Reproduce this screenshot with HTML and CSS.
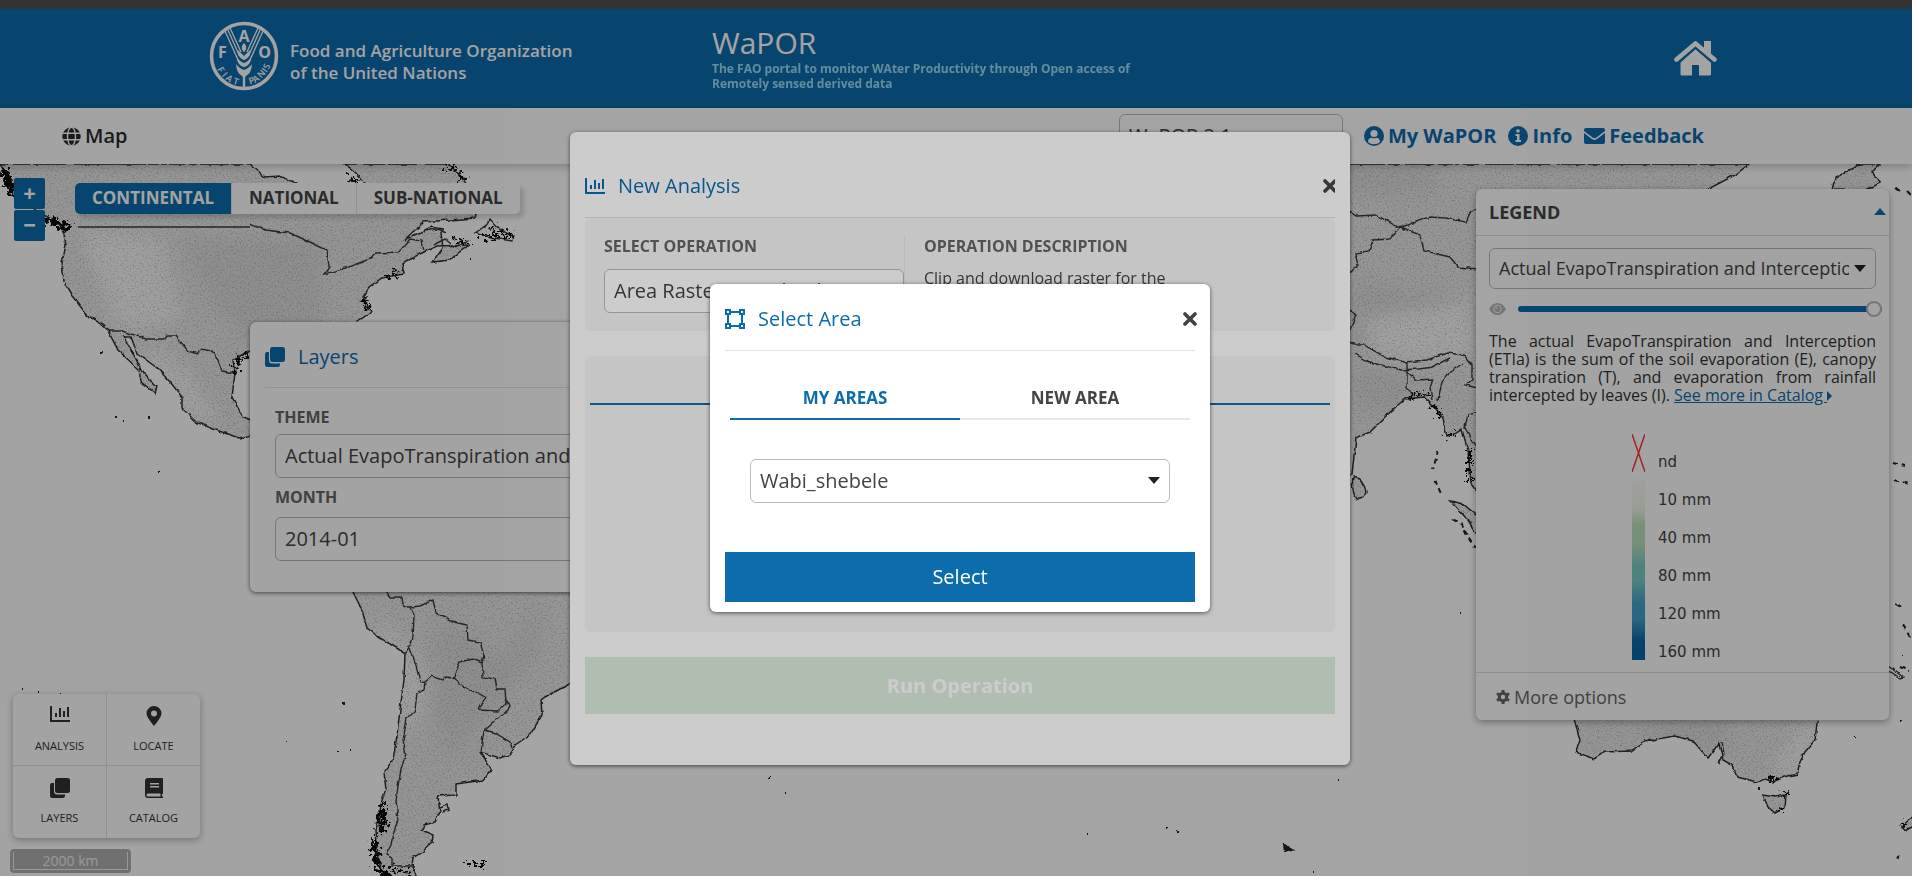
FILE: index.html
```html
<!DOCTYPE html>
<html lang="en">
<head>
<meta charset="utf-8">
<title>WaPOR</title>
<meta name="viewport" content="width=device-width, initial-scale=1">
<link rel="stylesheet" href="styles.css">
</head>
<body>
<svg class="sprite" aria-hidden="true">
  <symbol id="i-chart" viewBox="0 0 20 16"><path d="M1 0v15h19" fill="none" stroke="currentColor" stroke-width="2"/><path d="M5 7h2v4H5zM9 2h2v9H9zM13 5h2v6h-2zM17 1h2v10h-2z" fill="currentColor"/></symbol>
  <symbol id="i-layers" viewBox="0 0 20 20"><path d="M7.500 0h10A2.500 2.500 0 0 1 20 2.500v10a2.500 2.500 0 0 1-2.500 2.500h-10A2.500 2.500 0 0 1 5 12.500v-10A2.500 2.500 0 0 1 7.500 0z" fill="currentColor"/><path d="M4 5H2a2 2 0 0 0-2 2v11a2 2 0 0 0 2 2h11a2 2 0 0 0 2-2v-1.500H7A3 3 0 0 1 4 13z" fill="currentColor"/></symbol>
  <symbol id="i-x" viewBox="0 0 14 14"><path d="M2 2l10 10M12 2L2 12" stroke="currentColor" stroke-width="3.600" stroke-linecap="round"/></symbol>
  <symbol id="i-down" viewBox="0 0 12 7"><path d="M0 0h12L6 7z" fill="currentColor"/></symbol>
</svg>

<div class="app">
  <div class="strip"></div>
  <header class="banner">
    <div class="brand">
      <svg class="fao" viewBox="0 0 70 70" role="img" aria-label="FAO emblem">
        <circle cx="35" cy="35" r="32.500" fill="none" stroke="#fff" stroke-width="3.500"/>
        <g fill="none" stroke="#fff" stroke-width="1.300">
          <path d="M16 10l13 29M18.500 8l12 27M21 7l11 24M54 10L41 39M51.500 8l-12 27M49 7L38 31"/>
        </g>
        <g fill="#fff">
          <path d="M35 22c3 3 3 6 0 9-3-3-3-6 0-9z"/>
          <path d="M29 29l6 6 6-6v4q-2 5-6 6-4-1-6-6zM28 36q3 5 7 6 4-1 7-6v3q-2 6-7 7-5-1-7-7zM27 43q4 5 8 6 4-1 8-6-.500 9-6 12l-.800 1V67h-2.400V56l-.800-1q-5.500-3-6-12z"/>
          <g class="fao-big"><text x="35" y="21" text-anchor="middle">A</text><text x="13.500" y="36.500" text-anchor="middle">F</text><text x="55.500" y="36.500" text-anchor="middle">O</text></g>
          <g class="fao-small"><text transform="translate(8 48) rotate(62)">F</text><text transform="translate(12.500 54.500) rotate(50)">I</text><text transform="translate(16 58) rotate(38)">A</text><text transform="translate(23.500 62.500) rotate(20)">T</text><text transform="translate(41 63.500) rotate(-18)">P</text><text transform="translate(46 62) rotate(-32)">A</text><text transform="translate(52 57.500) rotate(-45)">N</text><text transform="translate(57.500 52) rotate(-55)">I</text><text transform="translate(59.500 49) rotate(-65)">S</text></g>
        </g>
      </svg>
      <p class="org">Food and Agriculture Organization<br>of the United Nations</p>
    </div>
    <div class="headline">
      <h1>WaPOR</h1>
      <p>The FAO portal to monitor WAter Productivity through Open access of Remotely sensed derived data</p>
    </div>
    <a class="home" href="#" aria-label="Home"><svg width="43" height="35" viewBox="0 0 43 35"><path d="M21.500 8L37 21.500V33a1.500 1.500 0 0 1-1.500 1.500H25V24h-7v10.500H8A1.500 1.500 0 0 1 6.500 33V21.500z" fill="#fff"/><path d="M2.500 18.500L21.500 2.500 40.500 18.500" fill="none" stroke="#fff" stroke-width="4.500" stroke-linecap="round"/><path d="M30 0h7v13l-7-6z" fill="#fff"/><path d="M5 21.500L21.500 7.300 38 21.500" fill="none" stroke="#0d6cac" stroke-width="1.500"/></svg></a>
  </header>

  <nav class="nav">
    <a class="nav-map" href="#"><svg width="19" height="19" viewBox="0 0 19 19"><circle cx="9.500" cy="9.500" r="9.200" fill="#2b2b2b"/><g fill="none" stroke="#fff" stroke-width="1.400"><ellipse cx="9.500" cy="9.500" rx="4" ry="9.200"/><path d="M0 6.200h19M0 12.800h19"/></g></svg>Map</a>
    <span class="pick nav-version"><select aria-label="Version"><option>WaPOR 2.1</option></select></span>
    <a class="nav-link" href="#"><svg width="20" height="20" viewBox="0 0 20 20"><circle cx="10" cy="10" r="10" fill="currentColor"/><circle cx="10" cy="7.500" r="3.600" fill="#fff"/><path d="M4 16c0-3 2-4.200 3.500-4.200q2.500 1 5 0C14 11.800 16 13 16 16c-3 3-9 3-12 0z" fill="#fff"/></svg>My WaPOR</a>
    <a class="nav-link" href="#"><svg width="20" height="20" viewBox="0 0 20 20"><circle cx="10" cy="10" r="10" fill="currentColor"/><circle cx="10" cy="5" r="1.800" fill="#fff"/><path d="M7.500 8h4v6H13v2H7.500v-2H9v-4H7.500z" fill="#fff"/></svg>Info</a>
    <a class="nav-link" href="#"><svg width="21" height="16" viewBox="0 0 21 16"><path d="M2 0h17a2 2 0 0 1 2 2v1l-8.500 6.500q-2 1.500-4 0L0 3V2a2 2 0 0 1 2-2zM0 5l8 6q2.500 1.800 5 0l8-6v9a2 2 0 0 1-2 2H2a2 2 0 0 1-2-2z" fill="currentColor"/></svg>Feedback</a>
  </nav>

  <main class="map">
    <svg class="world" viewBox="0 164 1912 712" preserveAspectRatio="xMidYMin slice" aria-hidden="true">
      <defs>
        <filter id="rough" x="-5%" y="-5%" width="110%" height="110%" color-interpolation-filters="sRGB"><feTurbulence type="fractalNoise" baseFrequency="0.120" numOctaves="3" seed="4"/><feDisplacementMap in="SourceGraphic" scale="4" xChannelSelector="R" yChannelSelector="G"/></filter>
        <filter id="ragged" x="-20%" y="-20%" width="140%" height="140%" color-interpolation-filters="sRGB"><feTurbulence type="fractalNoise" baseFrequency="0.250" numOctaves="3" seed="9"/><feDisplacementMap in="SourceGraphic" scale="18" xChannelSelector="R" yChannelSelector="G"/></filter>
        <filter id="relief" x="0" y="0" width="100%" height="100%" color-interpolation-filters="sRGB"><feTurbulence type="fractalNoise" baseFrequency="0.600" numOctaves="3" seed="7"/><feColorMatrix values="0 0 0 0 0.350  0 0 0 0 0.350  0 0 0 0 0.350  4 0 0 0 -2.050"/><feComposite in2="SourceGraphic" operator="in"/></filter>
        <filter id="soft"><feGaussianBlur stdDeviation="9"/></filter>
        <clipPath id="landclip"><use href="#landshape"/></clipPath>
        <path id="landshape" d="M0 164L5 172 12 180 14 196 30 206 44 215 60 224 64 235 66 245 62 263 64 282 73 297 87 315 98 322 108 331 118 350 139 370 141 382 155 393 157 387 143 373 135 357 124 337 131 337 137 353 157 368 171 383 182 397 182 408 196 422 216 430 239 438 252 435V420L243 417 232 397 235 373 233 360 252 350 350 330 357 322 371 312 363 297 369 288 382 278 404 274 402 263 424 252 437 246 469 245 449 260 433 262 443 248 441 233 443 229 431 227 404 240 424 222 475 218 478 205 465 182 453 167 447 164H345L355 172 365 183 340 200H310L296 183 280 176 265 177 250 164Z
          M352 590L362 610 367 628 380 638 403 652 405 653 404 680 400 710 397 735 393 760 384 772 386 790 382 800 376 830 378 860 386 880H418L412 867 413 858 422 852 432 843 433 835 421 830 424 825 435 822 440 812 438 796 456 795 456 784 484 780 491 770 486 760 480 752 500 758 510 755 515 745 530 735 542 715 541 700 545 697 575 681V585Z
          M1345 164V475H1352L1356 438 1370 432 1385 417 1398 405 1405 399 1425 397 1433 405 1443 418 1447 437 1462 430 1468 450 1471 483 1480 495 1700 200 1708 189 1735 175 1749 164Z
          M1832 190L1835 178 1860 164H1880L1872 172 1880 183 1866 190Z
          M1353 477Q1362 475 1366 492 1364 500 1357 499 1351 490 1353 477Z
          M1450 501L1463 504 1480 518V540L1468 520Z
          M1573 715L1580 740 1576 752 1594 759 1605 752 1631 751 1645 741 1675 736 1693 741 1708 758 1719 743 1723 760 1732 765 1737 777 1757 782 1765 779 1773 782 1784 777 1797 774 1800 762 1805 752 1815 740 1818 715Z
          M1763 795L1775 797 1786 795 1785 808 1775 813 1768 807Z
          M1915 815L1902 826 1905 830 1915 826Z"/>
      </defs>
      <rect y="164" width="1912" height="712" fill="#fff"/>
      <g filter="url(#rough)">
        <use href="#landshape" fill="#e9e9e9"/>
        <g clip-path="url(#landclip)">
          <g fill="#dedede" filter="url(#soft)"><path d="M180 240h140v120h-50l-60-60zM440 610l60 50 40-60v50l-90 110-20-60zM1350 280l110 20v20l-110 30zM1350 370h60v40h-60zM1345 164h90v30h-90zM1640 720h90v30l-80-10z"/></g>
          <g fill="#f9f9f9" filter="url(#soft)"><path d="M80 230l80 10 20 80-60 10zM140 345l40 20 40 60h-20l-50-50zM370 600l60 80-20 60-20-80zM1360 320l110-20v60h-90zM1800 725h20v20l-20 30h-30z"/></g>
        </g>
        <use href="#landshape" fill="none" stroke="#303030" stroke-width="1.500"/>
        <g fill="none" stroke="#3a3a3a" stroke-width="1.400">
          <path d="M108 331H122L146 339H165L167 336H176L188 351 197 354 202 349 211 351 218 360 222 371 235 373"/>
          <path d="M250 224L265 230 290 233 310 242 327 250 329 267 324 274 349 267 363 262 376 254 398 253 410 239 422 241 424 250"/>
          <path d="M386 590L390 598 402 598 404 607 411 607 414 615 413 637 411 645 405 653M411 607L420 606 433 600 436 613 458 623 467 625 468 640 480 642 484 655 482 663 472 659 460 662 453 678 446 677 443 680 432 676 425 682 420 683 416 665 410 648M453 678L465 687 485 698 479 710 498 711 506 703 505 689 497 689 495 679 483 677 482 663M505 699L510 705 508 710 485 730 483 735 481 752M485 730L495 733 510 742 512 748M425 682L424 690 417 693 415 710 407 718 403 740 406 755 402 765 399 780 396 800 398 820 393 835 391 845 386 855 392 858V866H414"/>
          <path d="M1350 211L1357 216 1376 215 1398 227 1408 225 1430 217 1445 218 1466 222 1470 213 1478 208M1400 227L1420 235 1424 251 1450 257 1458 267 1478 269M1400 227L1389 239 1373 240 1369 251 1355 253 1358 265 1350 273M1350 310L1356 314 1350 330M1350 342L1357 345 1364 345 1385 357 1405 362 1427 360 1447 353 1464 355 1472 365 1472 380 1466 385 1478 388M1355 354L1370 362 1400 370 1420 369 1432 367 1450 358M1407 361L1407 372 1417 380 1433 379 1430 388 1432 400M1407 372V388L1415 396M1438 400L1442 382 1450 372 1462 364M1478 411L1468 414 1465 428 1472 440 1478 448"/>
          <path d="M475 233L485 226 490 219 500 230 513 236 512 241 500 239 490 237ZM424 232Q437 226 446 233M433 245l12-6 10 8 14-6M1888 666L1903 677 1900 678 1888 670ZM1722 742l2 12-6 9M440 808l8-3 1 5-7 2"/>
        </g>
      </g>
      <path d="M78 227H250" stroke="#3a3a3a" stroke-width="1.400"/>
      <use href="#landshape" fill="#000" filter="url(#relief)" opacity=".25"/>
      <g filter="url(#ragged)" fill="none" stroke="#0c0c0c" stroke-width="7">
        <path d="M3 168L8 182 12 196M45 219L56 223 70 227M382 808L382 832M374 838L376 858 380 870 392 876"/>
        <path d="M374 842L378 866 390 874M384 802v22M392 868l20 6M466 864h18M490 228l22 8" stroke-width="4" stroke-dasharray="5 2"/>
        <path d="M445 168L458 170 464 182M350 178l10 6M364 298l4 12M385 276l18-4M455 240l14 4M483 236l30 0M235 372l4-12 11-6M1408 398L1424 392 1428 398M1432 405L1444 418M1446 436L1456 434M1470 450V482M1770 778l8 4M1784 790l2 6M1777 810l6-2M1902 826l4-3" stroke-width="4" stroke-dasharray="6 3"/>
      </g>
      <g filter="url(#rough)" fill="none" stroke="#222" stroke-width="2">
        <path d="M1438 450L1433 470M1435 480L1442 496M1452 519L1462 524 1468 538 1476 548M1893 463l12 3M1894 480l16 4M1896 604l6 4M1903 625l8 14M1900 667l9 4M102 322l5 6M131 350l3 5" stroke-dasharray="5 4"/>
        <path d="M100 353h2M123 421h1M115 417h2M148 417h2M158 472h1M22 689h1M38 692h1M60 694h1M343 704h2M285 742h1M338 751h1M350 750h1M769 778h2M786 793h1M1087 834h1M1166 828h2M1177 831h2M1313 872h2M1338 780h1M1460 613h1M1902 656h1M1901 721h1M1854 737h1M1758 789h2M1897 858l2-2M1896 188l4 3M1907 191l4 4M470 259h1"/>
        <path d="M1284 845l8 5-7 2z" fill="#222"/>
      </g>
    </svg>

    <div class="zoom"><button type="button">+</button><button type="button">−</button></div>
    <div class="levels">
      <button type="button" class="active">CONTINENTAL</button><button type="button">NATIONAL</button><button type="button">SUB-NATIONAL</button>
    </div>

    <section class="layers">
      <h2 class="panel-title"><svg width="20" height="20"><use href="#i-layers"/></svg>Layers</h2>
      <div class="layers-body">
        <label for="theme">THEME</label>
        <span class="pick"><select id="theme"><option>Actual EvapoTranspiration and Interception</option></select></span>
        <label for="month">MONTH</label>
        <span class="pick"><select id="month"><option>2014-01</option></select></span>
      </div>
    </section>

    <div class="tools">
      <button type="button"><svg width="20" height="16"><use href="#i-chart"/></svg>ANALYSIS</button>
      <button type="button"><svg width="16" height="20" viewBox="0 0 16 20"><path fill-rule="evenodd" d="M8 0a7.500 7.500 0 0 1 7.500 7.500Q15.500 11 8 20 .500 11 .500 7.500A7.500 7.500 0 0 1 8 0zM8 4.500a3 3 0 1 0 0 6 3 3 0 0 0 0-6z" fill="currentColor"/></svg>LOCATE</button>
      <button type="button"><svg width="20" height="20"><use href="#i-layers"/></svg>LAYERS</button>
      <button type="button"><svg width="18" height="20" viewBox="0 0 18 20"><path fill-rule="evenodd" d="M3 0h15v16h-1v2.500h1V20H3a3 3 0 0 1-3-3V3a3 3 0 0 1 3-3zM3 15.500a1.500 1.500 0 0 0 0 3h12.500v-3zM5 5v1.500h9V5zM5 8v1.500h9V8z" fill="currentColor"/></svg>CATALOG</button>
    </div>
    <div class="scale"><span>2000 km</span></div>

    <aside class="legend">
      <header><h2>LEGEND</h2><svg width="12" height="7" viewBox="0 0 12 7"><path d="M0 7h12L6 0z" fill="#0d6cac"/></svg></header>
      <div class="legend-body">
        <span class="pick small"><select aria-label="Legend layer"><option>Actual EvapoTranspiration and Interception</option></select><svg class="caret" width="12" height="7"><use href="#i-down"/></svg></span>
        <div class="opacity">
          <svg width="17" height="12" viewBox="0 0 17 12"><path d="M0 6Q3.500 0 8.500 0T17 6Q13.500 12 8.500 12T0 6z" fill="#b5b5b5"/><circle cx="8.500" cy="6" r="3.700" fill="none" stroke="#eee" stroke-width="1.200"/><path d="M8 3.500Q6.500 4 6.300 6H8z" fill="#eee"/></svg>
          <input type="range" min="0" max="100" value="100" aria-label="Opacity">
        </div>
        <p>The actual EvapoTranspiration and Interception (ETIa) is the sum of the soil evaporation (E), canopy transpiration (T), and evaporation from rainfall intercepted by leaves (I). <a href="#">See more in Catalog <svg width="5" height="10" viewBox="0 0 5 10"><path d="M0 0l5 5-5 5z" fill="currentColor"/></svg></a></p>
        <div class="ramp">
          <div class="bar"><svg width="13" height="38" viewBox="0 0 13 38"><path d="M0 0l13 38M13 0L0 38" stroke="#f33" stroke-width="1.500"/></svg><i></i></div>
          <ul><li>nd</li><li>10 mm</li><li>40 mm</li><li>80 mm</li><li>120 mm</li><li>160 mm</li></ul>
        </div>
      </div>
      <footer><button type="button"><svg width="14" height="14" viewBox="0 0 14 14"><circle cx="7" cy="7" r="3.700" fill="none" stroke="currentColor" stroke-width="3"/><path d="M7 0v3M7 11v3M.900 3.500l2.600 1.500M10.500 9l2.600 1.500M.900 10.500L3.500 9M10.500 5l2.600-1.500" stroke="currentColor" stroke-width="3"/></svg>More options</button></footer>
    </aside>
  </main>
</div>

<div class="backdrop">
  <section class="modal analysis" role="dialog" aria-labelledby="analysis-title">
    <header class="modal-head">
      <h2 class="panel-title" id="analysis-title"><svg width="20" height="16"><use href="#i-chart"/></svg>New Analysis</h2>
      <button type="button" class="close" aria-label="Close"><svg width="14" height="14"><use href="#i-x"/></svg></button>
    </header>
    <div class="box operation">
      <div class="op-pick"><label for="op">SELECT OPERATION</label><span class="pick"><select id="op"><option>Area Raster Download</option></select></span></div>
      <div class="op-text"><h3>OPERATION DESCRIPTION</h3><p>Clip and download raster for the</p></div>
    </div>
    <div class="box params"><div class="rule"></div></div>
    <button type="button" class="run" disabled>Run Operation</button>
  </section>
</div>

<div class="backdrop">
  <section class="modal area" role="dialog" aria-labelledby="area-title">
    <header class="modal-head">
      <h2 class="panel-title" id="area-title"><svg width="20" height="20" viewBox="0 0 20 20"><path d="M3 3h14v14H3z" fill="none" stroke="currentColor" stroke-width="2"/><g fill="#fff" stroke="currentColor" stroke-width="2"><path d="M1 1h4v4H1zM15 1h4v4h-4zM1 15h4v4H1zM15 15h4v4h-4z"/></g></svg>Select Area</h2>
      <button type="button" class="close" aria-label="Close"><svg width="14" height="14"><use href="#i-x"/></svg></button>
    </header>
    <div class="tabs" role="tablist"><button type="button" role="tab" aria-selected="true">MY AREAS</button><button type="button" role="tab" aria-selected="false">NEW AREA</button></div>
    <span class="pick"><select aria-label="Area"><option>Wabi_shebele</option></select><svg class="caret" width="12" height="7"><use href="#i-down"/></svg></span>
    <button type="button" class="choose">Select</button>
  </section>
</div>
</body>
</html>
```
FILE: styles.css
```css
* { box-sizing: border-box; }
body { margin: 0; font: 16px/20px "Open Sans", "Noto Sans", sans-serif; color: #444; overflow: hidden; }
h1, h2, h3, p, ul { margin: 0; padding: 0; font-weight: 400; }
ul { list-style: none; }
button { font: inherit; color: inherit; border: 0; background: none; padding: 0; }
svg { display: block; flex: none; }
.sprite { position: absolute; width: 0; height: 0; }

.app { min-height: 100vh; display: flex; flex-direction: column; }
.strip { height: 9px; background: #505050; }
.banner { height: 99px; padding: 0 195px 0 209px; background: #0d6cac; color: #fff; display: flex; }
.brand { width: 503px; display: flex; gap: 11px; padding-top: 12px; }
.fao { width: 70px; height: 70px; }
.fao-big { font: 700 16px "Open Sans", sans-serif; }
.fao-small { font: 600 9px "Open Sans", sans-serif; }
.org { padding-top: 19px; font-size: 17px; line-height: 22px; font-weight: 600; }
.headline { width: 460px; padding-top: 15px; }
.headline h1 { font-size: 30px; line-height: 37px; }
.headline p { font-size: 12px; line-height: 15px; font-weight: 700; color: #a9e7ff; opacity: .9; }
.home { margin-left: auto; padding-top: 32px; }

.nav { height: 56px; padding: 0 208px 0 62px; background: #fff; display: flex; align-items: center; gap: 12px; box-shadow: 0 2px 8px rgba(0,0,0,.25); position: relative; z-index: 1; }
.nav a { display: flex; align-items: center; gap: 4px; font-size: 20px; line-height: 28px; font-weight: 600; text-decoration: none; }
.nav-map { color: #2b2b2b; margin-right: auto; }
.nav .nav-link { color: #0d6cac; font-weight: 700; }
.nav-version { width: 224px; margin-right: 9px; }

.pick { display: block; position: relative; }
.pick select { appearance: none; display: block; width: 100%; height: 44px; padding: 0 26px 2px 9px; border: 1px solid #bbb; border-radius: 6px; background: #fff; font: 20px "Open Sans", sans-serif; color: #444; }
.pick.small select { height: 41px; font-size: 18px; }
.caret { position: absolute; right: 10px; top: 50%; margin-top: -4px; color: #222; }

.map { flex: 1; position: relative; overflow: hidden; }
.world { position: absolute; inset: 0; width: 100%; height: 100%; }
.zoom, .levels, .layers, .tools, .scale, .legend { position: absolute; }
.zoom { left: 14px; top: 14px; display: grid; gap: 1px; }
.zoom button { width: 31px; height: 31px; background: #0d6cac; color: #fff; font-size: 22px; line-height: 26px; padding-bottom: 4px; font-weight: 700; border-radius: 2px; }
.levels { left: 75px; top: 19px; display: flex; background: #fff; border-radius: 5px; box-shadow: 4px 4px 4px rgba(0,0,0,.15); }
.levels button { height: 31px; padding: 0 17px 1px; font-size: 17px; font-weight: 700; border-left: 1px solid #e3e3e3; }
.levels .active { background: #0d6cac; color: #fff; border-radius: 5px 0 0 5px; border-left: 0; }
.layers { left: 250px; top: 158px; width: 520px; padding: 0 15px 31px; background: #fff; border-radius: 6px; box-shadow: 0 1px 4px rgba(0,0,0,.6); }
.panel-title { display: flex; align-items: center; gap: 13px; font-size: 20px; line-height: 28px; color: #0d6cac; }
.layers .panel-title { height: 66px; padding-top: 4px; border-bottom: 1px solid #e3e3e3; }
.layers-body { padding: 19px 10px 0; }
label, h3 { display: block; font-size: 16px; line-height: 20px; font-weight: 700; color: #666; }
.layers-body label { padding: 0 0 7px; }
.layers-body .pick + label { padding: 9px 0 10px; }
.tools { left: 13px; bottom: 38px; display: grid; grid-template-columns: 94px 93px; background: #fff; border-radius: 6px; box-shadow: 0 2px 7px rgba(0,0,0,.3); }
.tools button { height: 72px; display: flex; flex-direction: column; align-items: center; justify-content: space-between; padding: 12px 0 11px; font-size: 11px; line-height: 18px; color: #333; }
.tools button:nth-child(odd) { border-right: 1px solid #e3e3e3; }
.tools button:nth-child(-n+2) { border-bottom: 1px solid #e3e3e3; padding-bottom: 10px; }
.scale { left: 10px; bottom: 3px; width: 121px; padding: 3px; background: #b0b0b0; border-radius: 4px; }
.scale span { display: block; height: 18px; border: 1px solid #eee; border-top: 0; text-align: center; font-size: 14px; line-height: 17px; color: #eee; }

.legend { right: 23px; top: 25px; width: 413px; background: #fff; border-radius: 6px; box-shadow: 0 2px 7px rgba(0,0,0,.35); }
.legend > header { height: 47px; padding: 0 3px 1px 13px; border-bottom: 1px solid #ddd; display: flex; align-items: center; justify-content: space-between; }
.legend h2 { font-size: 18px; font-weight: 700; }
.legend-body { padding: 12px 13px; }
.opacity { display: flex; gap: 12px; align-items: center; margin: 10px -6px 13px 0; height: 20px; }
.opacity input { appearance: none; flex: 1; min-width: 0; height: 6px; margin: 0; border-radius: 3px; background: #0d6cac; }
.opacity input::-webkit-slider-thumb { appearance: none; width: 16px; height: 16px; border: 2px solid #bbb; border-radius: 50%; background: #fff; }
.legend p { font-size: 16px; line-height: 18px; text-align: justify; color: #333; }
.legend p a { color: #0d6cac; }
.legend p svg { display: inline-block; }
.ramp { display: flex; gap: 13px; margin: 30px 0 0 143px; font: 15px/38px "DejaVu Sans", sans-serif; }
.bar { width: 13px; }
.bar i { display: block; height: 188px; background: linear-gradient(#fff, #eff5e8 20%, #b9e3bb 28%, #b9e3bb 38%, #79cbc4 50%, #79cbc4 58%, #43a2ca 70%, #43a2ca 78%, #0868ac 90%); }
.ramp ul { padding-top: 9px; margin-bottom: -11px; }
.legend footer { border-top: 1px solid #ddd; padding: 0 20px; }
.legend footer button { height: 47px; display: flex; align-items: center; gap: 4px; font-size: 18px; color: #666; }

.backdrop { position: fixed; inset: 0; z-index: 5; background: rgba(0,0,0,.2); display: flex; justify-content: center; align-items: flex-start; padding-left: 8px; }
.modal { background: #fff; border-radius: 6px; box-shadow: 0 1px 4px rgba(0,0,0,.6); padding: 0 15px; }
.modal-head { display: flex; justify-content: space-between; align-items: center; border-bottom: 1px solid #e3e3e3; }
.close { color: #444; margin-right: -2px; }
.analysis { width: 780px; margin-top: 132px; padding-bottom: 51px; }
.analysis .modal-head { height: 86px; padding-top: 22px; overflow: hidden; }
.box { background: #f7f7f7; border-radius: 6px; }
.operation { display: grid; grid-template-columns: 300px 1fr; padding: 18px 19px; margin-bottom: 25px; }
.op-pick label { padding-bottom: 13px; }
.op-text { border-left: 1px solid #eaeaea; padding-left: 19px; }
.op-text p { padding-top: 11px; line-height: 22px; }
.params { height: 276px; padding: 47px 5px; margin-bottom: 25px; }
.rule { height: 2px; background: #0d6cac; }
.run { display: block; width: 100%; height: 57px; background: #dbeedd; color: #fff; font-size: 20px; font-weight: 700; }
.area { width: 500px; margin-top: 284px; padding-bottom: 10px; }
.area .modal-head { height: 67px; padding-top: 3px; }
.tabs { display: grid; grid-template-columns: 1fr 1fr; margin: 27px 5px 39px; }
.tabs button { height: 42px; border-bottom: 2px solid #e8e8e8; font-size: 17px; font-weight: 700; }
.tabs [aria-selected="true"] { color: #0d6cac; border-color: #0d6cac; }
.area .pick { margin: 0 25px 49px; }
.choose { display: block; width: 100%; height: 50px; background: #0d6cac; color: #fff; font-size: 20px; }
```
